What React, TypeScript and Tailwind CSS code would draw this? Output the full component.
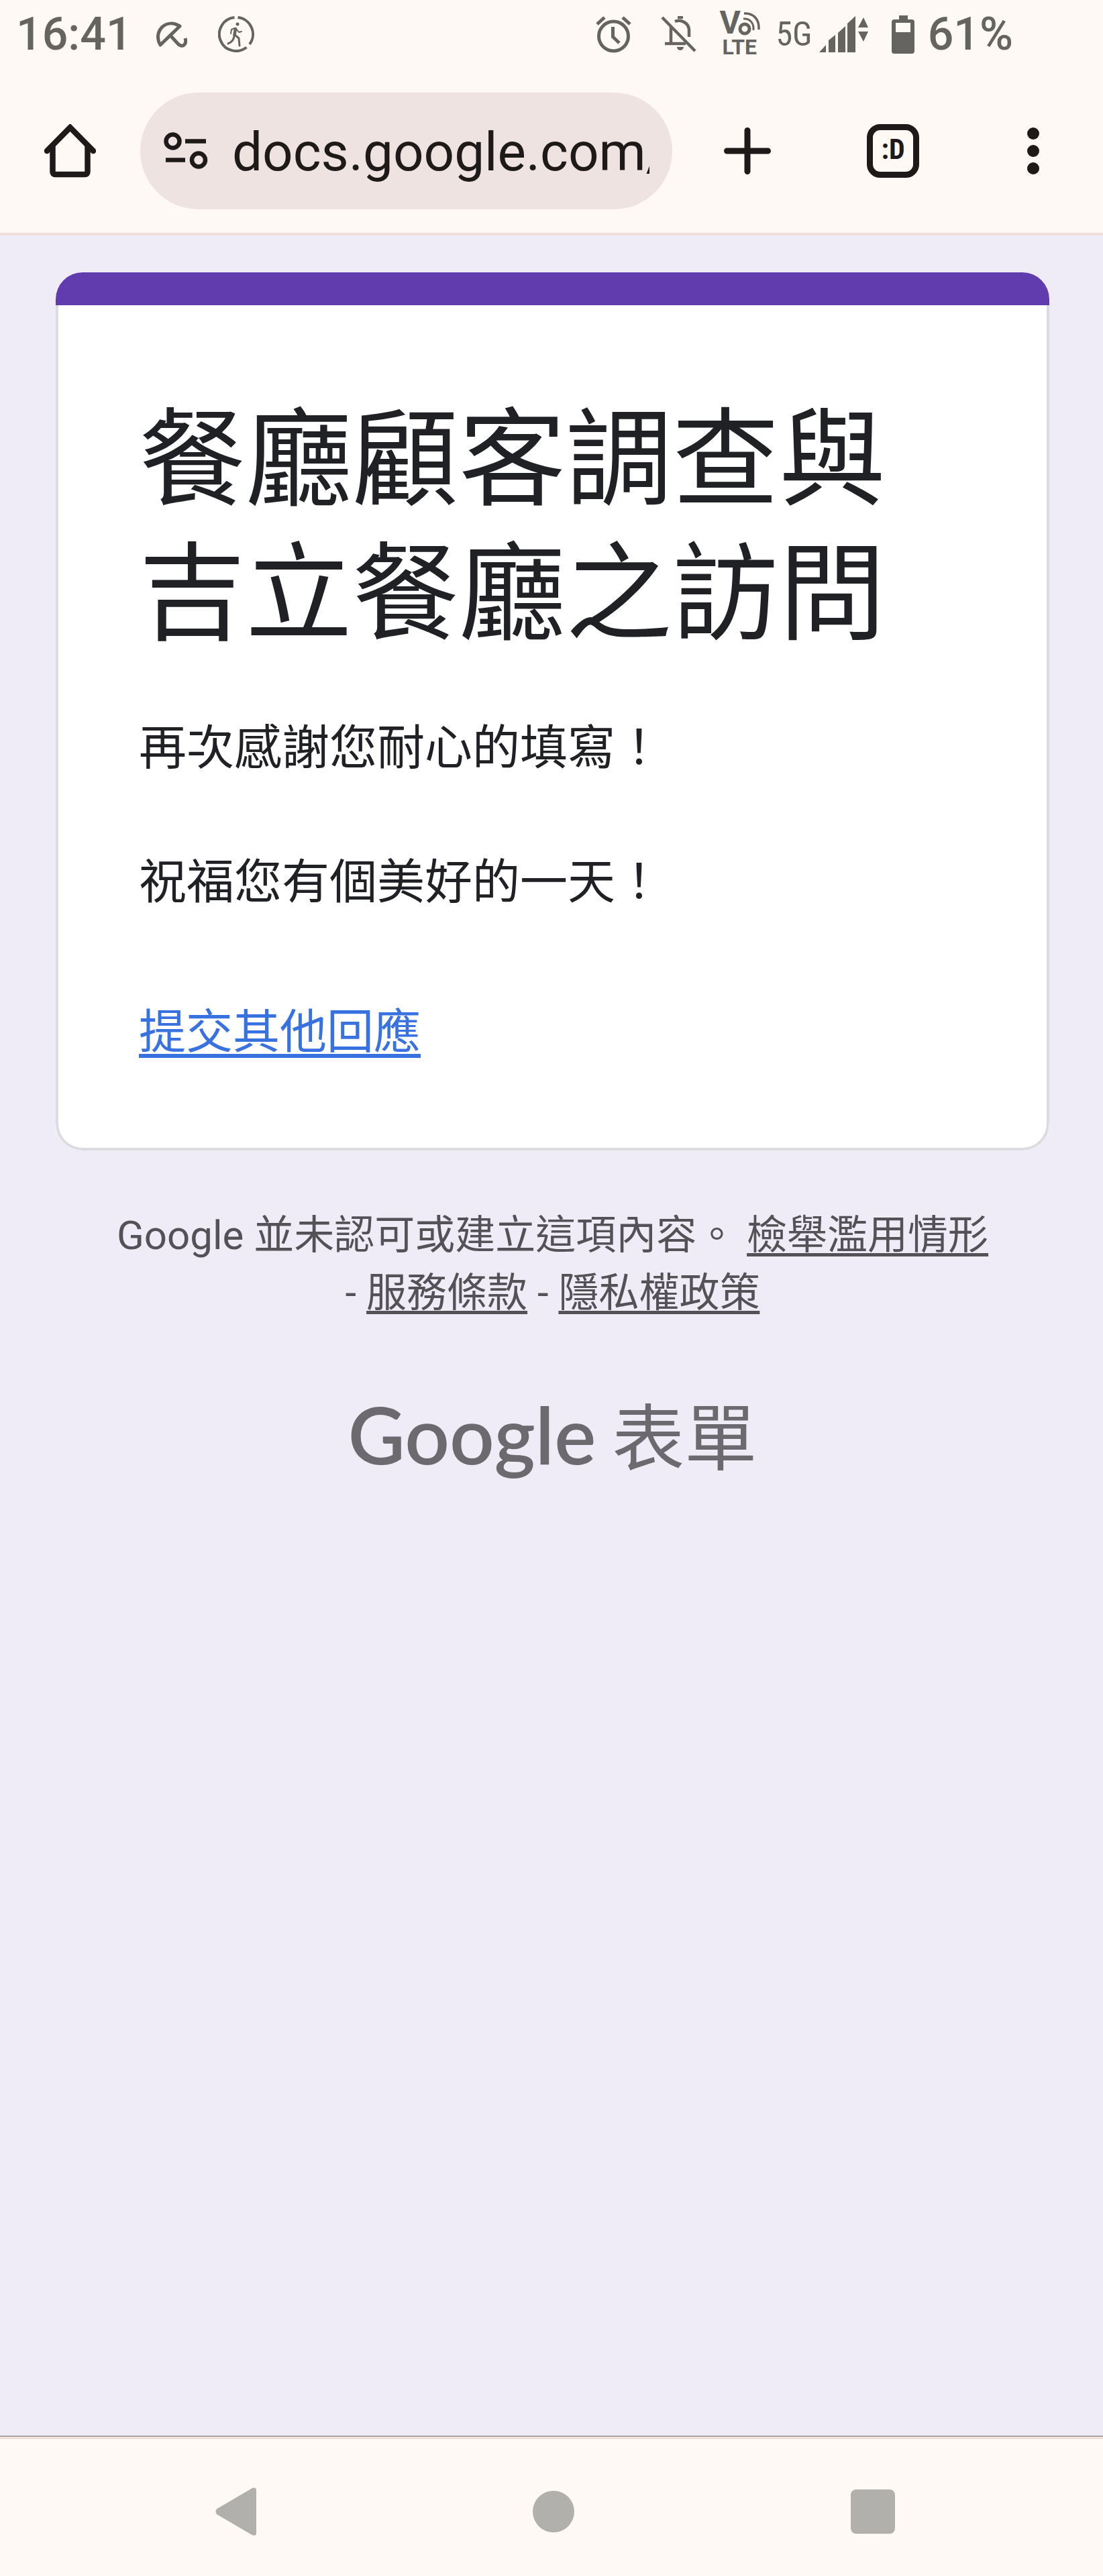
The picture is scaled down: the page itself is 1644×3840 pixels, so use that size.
import type { ReactNode } from "react";

const INK = "#656460";
const DARK = "#1f1a1a";

function UmbrellaIcon() {
  return (
    <svg width="46" height="39" viewBox="0 0 46 39" fill="none" stroke={INK} strokeWidth="5" strokeLinejoin="round">
      <path d="M6 35 35 7C25 1 15 2 8 9 1 17 1 27 6 35Z" />
      <path d="M21 21 32 33C38 40 46 35 43 25" />
    </svg>
  );
}

function RunnerIcon() {
  return (
    <svg width="54" height="54" viewBox="0 0 54 54" fill="none" stroke={INK} strokeLinecap="round" strokeLinejoin="round">
      <g strokeWidth="4" strokeLinecap="butt">
        <path d="M29.500 2.100A25 25 0 0 1 47 42" />
        <path d="M42.500 46.500A25 25 0 1 1 24.500 2.100" />
      </g>
      <circle cx="29" cy="12" r="2.500" fill={INK} stroke="none" />
      <path d="M26 19 24.500 28" strokeWidth="4.500" />
      <path d="M25 18 20 20 19 26M28 20 31 24 35 23" strokeWidth="2" />
      <path d="M24 29C24 35 20 39 15 41M25 28 31 33 32 44" strokeWidth="3" />
    </svg>
  );
}

function AlarmIcon() {
  return (
    <svg width="53" height="55" viewBox="0 0 53 55" fill="none" stroke={INK} strokeWidth="5">
      <circle cx="26.500" cy="30" r="22" />
      <path d="M25.500 16V31L35 40M2 12 13 2M51 12 40 2" />
    </svg>
  );
}

function BellOffIcon() {
  return (
    <svg width="54" height="54" viewBox="0 0 54 54" fill="none" stroke={INK} strokeWidth="4.500">
      <path d="M2 2 51 52" />
      <path d="M15 15V40M6 41H37M21 8C31 4 42 11 42 21V31" />
      <path d="M25 4V0H33V4Z" fill={INK} stroke="none" />
      <path d="M24 46H34A5 5 0 0 1 24 46Z" fill={INK} stroke="none" />
    </svg>
  );
}

function VolteIcon() {
  return (
    <div className="flex w-16 flex-col">
      <div className="flex h-[37px] items-start">
        <span className="text-[48px] leading-[33px] font-bold">V</span>
        <svg width="34" height="37" viewBox="0 0 34 37" fill="none" stroke={INK} className="-ml-1">
          <circle cx="10" cy="26" r="7" strokeWidth="5" />
          <path d="M8 11C18 10 24 18 23 28" strokeWidth="3" />
          <path d="M9 3C23 2 32 12 31 27" strokeWidth="3.500" />
        </svg>
      </div>
      <span className="pl-1 text-[32px] leading-8 font-bold">LTE</span>
    </div>
  );
}

function SignalIcon() {
  return (
    <svg width="74" height="56" viewBox="0 0 74 56" fill={INK}>
      <path d="M0 55 10 44V55ZM14 37 24 29V55H14ZM28 26 39 16V55H28ZM42 12 54 1V55H42ZM58 18 66 3 73 18ZM58 24H73L66 39Z" />
    </svg>
  );
}

function BatteryIcon() {
  return (
    <svg width="34" height="57" viewBox="0 0 34 57" fill={INK} fillRule="evenodd">
      <path d="M11 0H24V6H30Q34 6 34 10V53Q34 57 30 57H4Q0 57 0 53V10Q0 6 4 6H11ZM6 11V25H28V11Z" />
    </svg>
  );
}

function StatusBar() {
  return (
    <div className="flex h-[102px] items-center pl-6 pr-[134px] text-[68px] leading-[72px] font-medium text-[#656460]">
      <span>16:41</span>
      <div className="ml-9 flex items-center gap-[46px]">
        <UmbrellaIcon />
        <RunnerIcon />
      </div>
      <div className="ml-auto flex items-center">
        <AlarmIcon />
        <div className="ml-11">
          <BellOffIcon />
        </div>
        <div className="ml-[33px]">
          <VolteIcon />
        </div>
        <span className="ml-5 font-['Roboto_Condensed','Liberation_Sans_Narrow',Roboto,sans-serif] text-[50px] font-normal">
          5G
        </span>
        <div className="ml-[10px]">
          <SignalIcon />
        </div>
        <div className="ml-[34px]">
          <BatteryIcon />
        </div>
        <span className="ml-5">61%</span>
      </div>
    </div>
  );
}

function IconButton({ label, children, className }: { label: string; children?: ReactNode; className?: string }) {
  return (
    <button type="button" aria-label={label} className={className}>
      {children}
    </button>
  );
}

function Toolbar() {
  return (
    <div className="flex h-[174px] items-center pl-[66px] pr-[95px]">
      <IconButton label="首頁">
        <svg width="77" height="80" viewBox="0 0 77 80" fill="none" stroke={DARK} strokeWidth="8.500" strokeLinecap="round">
          <path d="M4 40 38.500 5 73 40" strokeLinejoin="miter" />
          <path d="M12.500 34V71Q12.500 75 16.500 75H60.500Q64.500 75 64.500 71V34" />
        </svg>
      </IconButton>
      <div className="ml-[66px] flex h-full min-w-0 flex-1 items-center rounded-full bg-[#eee3e1] pl-[35px] pr-[34px]">
        <IconButton label="網站資訊" className="shrink-0">
          <svg width="66" height="56" viewBox="0 0 66 56" fill="none" stroke={DARK} strokeWidth="6.500">
            <circle cx="13.500" cy="13.500" r="10" />
            <path d="M32 13.500H63M3 41.500H32" />
            <circle cx="52" cy="41.500" r="10" />
          </svg>
        </IconButton>
        <input
          type="text"
          aria-label="網址"
          readOnly
          value="docs.google.com/forms"
          className="ml-9 h-[104px] w-full min-w-0 bg-transparent pt-1 text-[80px] text-[#1f1a1a] outline-none"
        />
      </div>
      <IconButton label="新分頁" className="ml-[77px]">
        <svg width="70" height="72" viewBox="0 0 70 72" stroke={DARK} strokeWidth="9" strokeLinecap="round">
          <path d="M35 5.500V66.500M4.500 36H65.500" />
        </svg>
      </IconButton>
      <button
        type="button"
        aria-label="分頁"
        className="ml-[143px] flex h-20 w-[78px] items-center justify-center rounded-[20px] border-[9px] border-[#1f1a1a] pb-1 font-['Roboto_Condensed','Liberation_Sans_Narrow',Roboto,sans-serif] text-[42px] leading-10 font-bold text-[#1f1a1a]"
      >
        :D
      </button>
      <IconButton label="更多選項" className="ml-[161px]">
        <svg width="18" height="72" viewBox="0 0 18 72" fill={DARK}>
          <circle cx="9" cy="10" r="9" />
          <circle cx="9" cy="36" r="9" />
          <circle cx="9" cy="62" r="9" />
        </svg>
      </IconButton>
    </div>
  );
}

function FormCard() {
  return (
    <section className="overflow-hidden rounded-[40px] bg-white">
      <div className="h-[49px] bg-[#613caf]" />
      <div className="rounded-b-[40px] border-x-[4px] border-b-[4px] border-[#dadce0] px-[120px] pt-[132px] pb-[122px] text-[#202124]">
        <h1 className="text-[159px] leading-[200px]">餐廳顧客調查與吉立餐廳之訪問</h1>
        <p className="mt-[78px] text-[71px] leading-[100px]">再次感謝您耐心的填寫！</p>
        <p className="mt-[100px] text-[71px] leading-[100px]">祝福您有個美好的一天！</p>
        <a
          href="#again"
          className="mt-[124px] inline-block text-[70px] leading-[100px] text-[#3871e0] underline decoration-[6px] underline-offset-[8px]"
        >
          提交其他回應
        </a>
      </div>
    </section>
  );
}

function Footer() {
  const link = "whitespace-nowrap underline decoration-[5px] underline-offset-[6px]";
  return (
    <footer className="text-center">
      <p className="mt-[84px] px-[80px] text-[60px] leading-[86px] text-[#545257]">
        Google 並未認可或建立這項內容。 <a href="#report" className={link}>檢舉濫用情形</a> -{" "}
        <a href="#terms" className={link}>服務條款</a> - <a href="#privacy" className={link}>隱私權政策</a>
      </p>
      <a href="#forms" className="mt-[87px] inline-flex items-baseline gap-6 leading-[160px] text-[#6c696f]">
        <span className="font-[Lato,sans-serif] text-[117px] font-semibold">Google</span>
        <span className="text-[108px]">表單</span>
      </a>
    </footer>
  );
}

function NavBar() {
  return (
    <nav className="border-t border-[#6f6b70] bg-[#fff9f6]">
      <div className="flex h-[208px] items-center justify-between border-t-[4px] border-[#f2dfdb] pl-[321px] pr-[310px] pt-3">
        <IconButton label="返回">
          <svg width="61" height="72" viewBox="0 0 61 72" fill="#b1b0ac">
            <path d="M2 32 55 1Q61-1 61 4V68Q61 73 55 71L2 40Q-1 36 2 32Z" />
          </svg>
        </IconButton>
        <IconButton label="主畫面" className="size-[62px] rounded-full bg-[#b1b0ac]" />
        <IconButton label="最近使用" className="size-[66px] rounded-[8px] bg-[#b1b0ac]" />
      </div>
    </nav>
  );
}

export default function App() {
  return (
    <div
      lang="zh-Hant"
      className="flex min-h-screen flex-col bg-[#efebf7] font-[Roboto,'Noto_Sans_CJK_TC',sans-serif]"
    >
      <header className="border-b-[4px] border-[#f2dfdb] bg-[#fff9f6] pb-[35px]">
        <StatusBar />
        <div className="pt-9">
          <Toolbar />
        </div>
      </header>
      <main className="flex-1 pt-[55px] pr-20 pl-[83px]">
        <FormCard />
        <Footer />
      </main>
      <NavBar />
    </div>
  );
}
